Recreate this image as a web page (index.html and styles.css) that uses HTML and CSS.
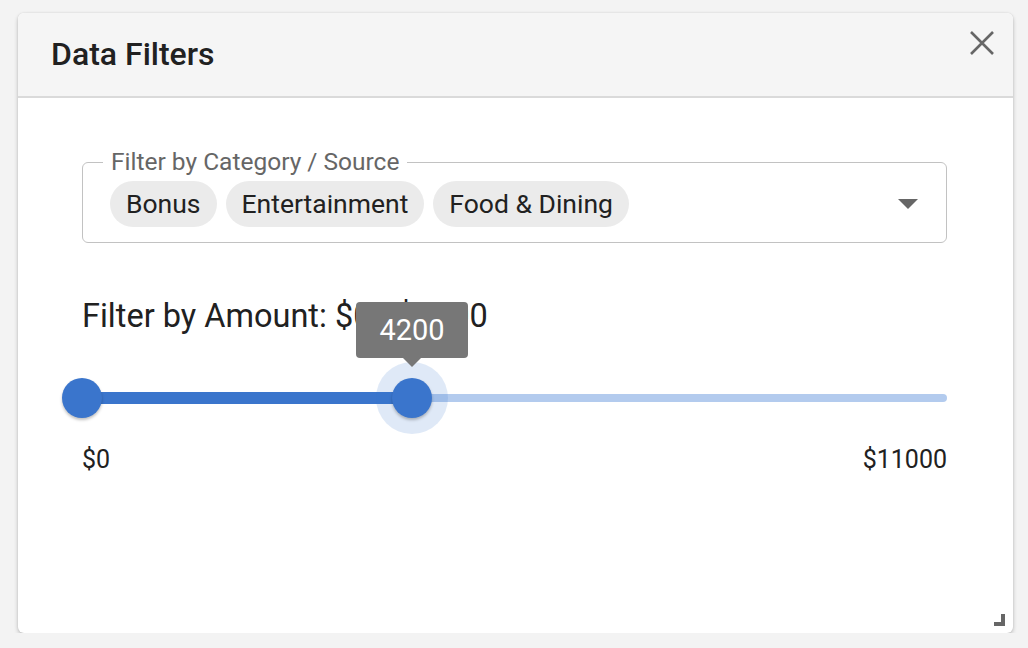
FILE: index.html
```html
<!DOCTYPE html>
<html>
<head>
<meta charset="utf-8">
<link rel="stylesheet" href="styles.css">
</head>
<body>
<div class="dialog">
  <div class="header">
    <h1 class="title">Data Filters</h1>
    <button class="close" aria-label="Close">
      <svg width="26" height="26" viewBox="0 0 26 26"><path d="M2 2 L24 24 M24 2 L2 24" stroke="#666" stroke-width="2.6" fill="none"/></svg>
    </button>
  </div>
  <div class="body">
    <div class="field">
      <span class="legend">Filter by Category / Source</span>
      <div class="chips">
        <span class="chip">Bonus</span>
        <span class="chip">Entertainment</span>
        <span class="chip">Food &amp; Dining</span>
      </div>
      <span class="arrow"></span>
    </div>
    <div class="amount">Filter by Amount: $0 - $4200</div>
    <div class="slider">
      <div class="rail"></div>
      <div class="track" style="width:330px"></div>
      <div class="thumb" style="left:0px"></div>
      <div class="halo" style="left:330px"></div>
      <div class="thumb" style="left:330px"></div>
      <div class="tip" style="left:330px">4200</div>
    </div>
    <div class="marks">
      <span>$0</span>
      <span>$11000</span>
    </div>
  </div>
  <span class="grip"></span>
</div>
</body>
</html>
```
FILE: styles.css
```css
html, body {
  margin: 0;
  padding: 0;
  background: #f3f3f3;
  font-family: Roboto, "Liberation Sans", Arial, sans-serif;
  color: #212121;
}
body {
  padding: 13px 15px 0 18px;
}
.dialog {
  position: relative;
  width: 995px;
  height: 620px;
  background: #fff;
  border-radius: 6px;
  box-shadow: 0 2px 4px rgba(0,0,0,0.22), 0 0 2px rgba(0,0,0,0.1);
  overflow: hidden;
}
.header {
  height: 83px;
  background: #f5f5f5;
  border-bottom: 2px solid #dadada;
  display: flex;
  align-items: center;
  justify-content: space-between;
  padding-left: 33px;
}
.title {
  margin: 0;
  font-size: 32px;
  font-weight: 500;
  line-height: 83px;
  color: #212121;
}
.close {
  border: 0;
  background: none;
  padding: 0;
  width: 26px;
  height: 26px;
  margin-right: 18px;
  align-self: flex-start;
  margin-top: 17px;
}
.close svg { display: block; }
.body {
  padding: 64px 66px 0 64px;
}
.field {
  position: relative;
  height: 79px;
  border: 1.5px solid #c2c2c2;
  border-radius: 6px;
  display: flex;
  align-items: center;
  padding-left: 27px;
}
.legend {
  position: absolute;
  top: -16px;
  left: 20px;
  padding: 0 8px;
  background: #fff;
  font-size: 24.5px;
  line-height: 30px;
  color: #666;
}
.chips {
  display: flex;
  gap: 9px;
  margin-top: 2px;
}
.chip {
  height: 46px;
  line-height: 46px;
  padding: 0 16px;
  border-radius: 23px;
  background: #ebebeb;
  font-size: 26.5px;
  color: #212121;
}
.arrow {
  position: absolute;
  right: 28px;
  top: 36px;
  width: 0;
  height: 0;
  border-left: 10px solid transparent;
  border-right: 10px solid transparent;
  border-top: 10px solid #666;
}
.amount {
  margin-top: 53px;
  font-size: 32.5px;
  line-height: 40px;
  color: #212121;
}
.slider {
  position: relative;
  height: 40px;
  margin-top: 42px;
}
.rail {
  position: absolute;
  left: 0;
  right: 0;
  top: 16px;
  height: 8px;
  border-radius: 4px;
  background: #b3cbee;
}
.track {
  position: absolute;
  left: 0;
  top: 14px;
  height: 12px;
  border-radius: 6px;
  background: #3a75cc;
}
.thumb {
  position: absolute;
  top: 0;
  width: 40px;
  height: 40px;
  margin-left: -20px;
  border-radius: 50%;
  background: #3a75cc;
  box-shadow: 0 2px 3px rgba(0,0,0,0.25);
}
.halo {
  position: absolute;
  top: -16px;
  width: 72px;
  height: 72px;
  margin-left: -36px;
  border-radius: 50%;
  background: rgba(58,117,204,0.16);
}
.tip {
  position: absolute;
  top: -76px;
  width: 112px;
  height: 56px;
  margin-left: -56px;
  background: #777;
  border-radius: 4px;
  color: #fff;
  font-size: 29px;
  line-height: 56px;
  text-align: center;
}
.tip::after {
  content: "";
  position: absolute;
  left: 47px;
  top: 56px;
  border-left: 9px solid transparent;
  border-right: 9px solid transparent;
  border-top: 9px solid #777;
}
.marks {
  display: flex;
  justify-content: space-between;
  margin-top: 27px;
  font-size: 25px;
  line-height: 30px;
  color: #212121;
}
.grip {
  position: absolute;
  right: 8px;
  bottom: 7px;
  width: 7px;
  height: 8px;
  border-right: 4px solid #666;
  border-bottom: 4px solid #666;
}
```
